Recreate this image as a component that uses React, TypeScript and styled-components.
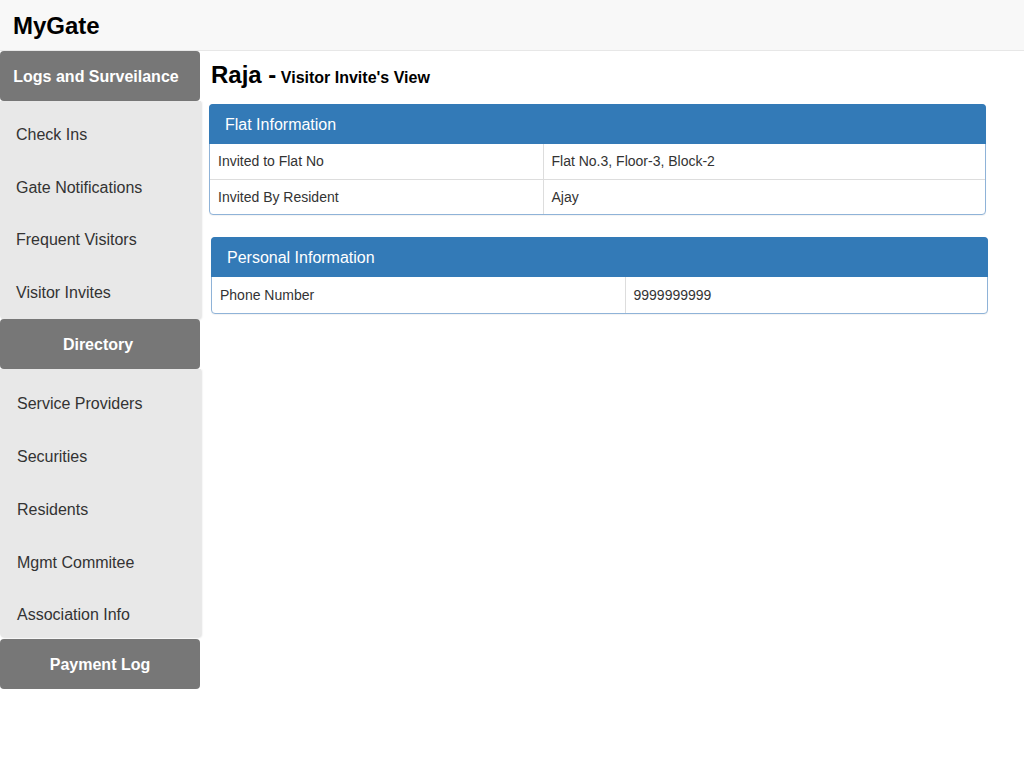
import React from "react";
import styled, { createGlobalStyle } from "styled-components";

const GlobalStyle = createGlobalStyle`
  html, body { margin: 0; padding: 0; background: #fff; }
  body { font-family: "Liberation Sans", Arial, sans-serif; color: #333; }
  * { box-sizing: border-box; }
`;

const Page = styled.div`
  width: 1024px;
  min-height: 768px;
  display: flex;
  flex-direction: column;
`;

const TopBar = styled.header`
  height: 51px;
  background: #f8f8f8;
  border-bottom: 1px solid #e7e7e7;
  padding: 1px 0 0 13px;
  display: flex;
  align-items: center;
`;

const Brand = styled.div`
  font-size: 24px;
  font-weight: bold;
  color: #000;
  line-height: 49px;
`;

const Body = styled.div`
  display: flex;
  align-items: flex-start;
`;

const Sidebar = styled.nav`
  width: 201px;
  flex: 0 0 201px;
  display: flex;
  flex-direction: column;
`;

const SectionButton = styled.div<{ $shift?: number }>`
  width: 200px;
  height: 50px;
  background: #777;
  border-radius: 4px;
  color: #fff;
  font-size: 16px;
  font-weight: bold;
  display: flex;
  align-items: center;
  justify-content: center;
  padding-top: 2px;
  padding-left: ${(p) => Math.max(0, p.$shift ?? 0)}px;
  padding-right: ${(p) => Math.max(0, -(p.$shift ?? 0))}px;
`;

const MenuPanel = styled.ul<{ $pt: number; $h: number; $indent: number; $item: number }>`
  list-style: none;
  margin: 0;
  padding: ${(p) => p.$pt}px 0 0;
  width: 201px;
  height: ${(p) => p.$h}px;
  overflow: hidden;
  background: #e8e8e8;
  border-radius: 0 0 4px 4px;
  box-shadow: 1px 1px 2px rgba(0, 0, 0, 0.12);
  li {
    padding-left: ${(p) => p.$indent}px;
    height: ${(p) => p.$item}px;
  }
`;

const Gap = styled.div<{ $h: number }>`
  height: ${(p) => p.$h}px;
`;

const MenuItem = styled.li`
  display: flex;
  align-items: center;
  font-size: 16px;
  color: #333;
`;

const Content = styled.main`
  flex: 1;
  display: flex;
  flex-direction: column;
  padding-top: 11px;
`;

const Title = styled.h3`
  margin: 0 0 13px 10px;
  font-size: 24px;
  line-height: 26px;
  font-weight: bold;
  color: #000;
`;

const Sub = styled.small`
  font-size: 16px;
  font-weight: bold;
  color: #000;
`;

const Panel = styled.section<{ $ml: number; $mb: number }>`
  margin-left: ${(p) => p.$ml}px;
  margin-bottom: ${(p) => p.$mb}px;
  width: 777px;
  border: 1px solid #8fb3d8;
  border-radius: 4px;
  background: #fff;
  box-shadow: 0 1px 1px rgba(0, 0, 0, 0.05);
`;

const PanelHeading = styled.div`
  height: 40px;
  margin: -1px -1px 0;
  background: #337ab7;
  border-radius: 4px 4px 0 0;
  color: #fff;
  font-size: 16px;
  padding: 2px 0 0 16px;
  display: flex;
  align-items: center;
`;

const Table = styled.table`
  width: 100%;
  border-collapse: collapse;
  font-size: 14px;
  color: #333;
`;

const Row = styled.tr`
  & + & td {
    border-top: 1px solid #ddd;
  }
`;

const Cell = styled.td<{ $w?: number; $h: number }>`
  height: ${(p) => p.$h}px;
  padding: 0 8px;
  vertical-align: middle;
  width: ${(p) => (p.$w ? `${p.$w}px` : "auto")};
  & + & {
    border-left: 1px solid #ddd;
  }
`;

const flatRows = [
  ["Invited to Flat No", "Flat No.3, Floor-3, Block-2"],
  ["Invited By Resident", "Ajay"],
];

const personalRows = [["Phone Number", "9999999999"]];

export default function App() {
  return (
    <Page>
      <GlobalStyle />
      <TopBar>
        <Brand>MyGate</Brand>
      </TopBar>
      <Body>
        <Sidebar>
          <SectionButton $shift={-8}>Logs and Surveilance</SectionButton>
          <MenuPanel $pt={8} $h={218} $indent={16} $item={52.5}>
            <MenuItem>Check Ins</MenuItem>
            <MenuItem>Gate Notifications</MenuItem>
            <MenuItem>Frequent Visitors</MenuItem>
            <MenuItem>Visitor Invites</MenuItem>
          </MenuPanel>
          <SectionButton $shift={-4}>Directory</SectionButton>
          <MenuPanel $pt={9} $h={268} $indent={17} $item={52.75}>
            <MenuItem>Service Providers</MenuItem>
            <MenuItem>Securities</MenuItem>
            <MenuItem>Residents</MenuItem>
            <MenuItem>Mgmt Commitee</MenuItem>
            <MenuItem>Association Info</MenuItem>
          </MenuPanel>
          <Gap $h={2} />
          <SectionButton $shift={0}>Payment Log</SectionButton>
        </Sidebar>
        <Content>
          <Title>
            Raja -<Sub> Visitor Invite's View</Sub>
          </Title>
          <Panel $ml={8} $mb={22}>
            <PanelHeading>Flat Information</PanelHeading>
            <Table>
              <tbody>
                {flatRows.map(([k, v]) => (
                  <Row key={k}>
                    <Cell $w={333} $h={35}>{k}</Cell>
                    <Cell $h={35}>{v}</Cell>
                  </Row>
                ))}
              </tbody>
            </Table>
          </Panel>
          <Panel $ml={10} $mb={0}>
            <PanelHeading>Personal Information</PanelHeading>
            <Table>
              <tbody>
                {personalRows.map(([k, v]) => (
                  <Row key={k}>
                    <Cell $w={413} $h={36}>{k}</Cell>
                    <Cell $h={36}>{v}</Cell>
                  </Row>
                ))}
              </tbody>
            </Table>
          </Panel>
        </Content>
      </Body>
    </Page>
  );
}
